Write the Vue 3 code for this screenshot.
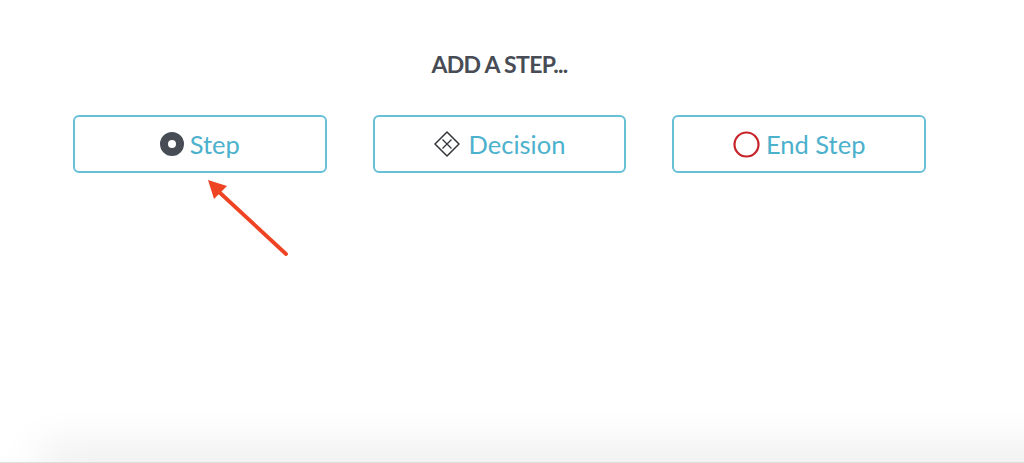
<script setup>
const steps = [
  { id: "step", label: "Step" },
  { id: "decision", label: "Decision" },
  { id: "end", label: "End Step" },
];
</script>

<template>
  <div class="page">
    <div class="content">
      <h2 class="title">ADD A STEP...</h2>
      <div class="buttons">
        <button v-for="s in steps" :key="s.id" class="step-btn" :class="s.id">
          <svg v-if="s.id === 'step'" class="icon" width="24" height="24" viewBox="0 0 24 24">
            <circle cx="12" cy="12" r="8" fill="none" stroke="#474c55" stroke-width="8" />
          </svg>
          <svg v-else-if="s.id === 'decision'" class="icon" width="26" height="26" viewBox="0 0 26 26">
            <path d="M13 1 L25 13 L13 25 L1 13 Z" fill="none" stroke="#33363b" stroke-width="1.5" stroke-linejoin="round" />
            <path d="M8.5 8.5 L17.5 17.5 M17.5 8.5 L8.5 17.5" fill="none" stroke="#33363b" stroke-width="1.3" />
          </svg>
          <svg v-else class="icon" width="27" height="27" viewBox="0 0 27 27">
            <circle cx="13.5" cy="13.5" r="12" fill="none" stroke="#c7242a" stroke-width="2.2" />
          </svg>
          <span>{{ s.label }}</span>
        </button>
      </div>
    </div>

    <svg class="arrow" width="100" height="90" viewBox="0 0 100 90">
      <path d="M8 0 L27 6 L14 19 Z" fill="#ee4423" />
      <path d="M18 11 L86 74" stroke="#ee4423" stroke-width="3.8" stroke-linecap="round" />
    </svg>

    <div class="bottom-shadow"></div>
    <div class="bottom-line"></div>
  </div>
</template>

<style scoped>
.page {
  position: relative;
  height: 463px;
  overflow: hidden;
  background: #ffffff;
  padding: 51px 0 0 73px;
  box-sizing: border-box;
  font-family: Lato, "Open Sans", sans-serif;
}

.content {
  width: 853px;
}

.title {
  margin: 0 0 37px;
  height: 27px;
  line-height: 27px;
  text-align: center;
  font-size: 23px;
  font-weight: 700;
  letter-spacing: -0.65px;
  color: #474c55;
}

.buttons {
  display: flex;
  gap: 46px;
}

.step-btn {
  flex: 1;
  height: 58px;
  display: flex;
  align-items: center;
  justify-content: center;
  gap: 6px;
  box-sizing: border-box;
  background: #ffffff;
  border: 2px solid #68c0d6;
  border-radius: 6px;
  padding: 0;
  font-family: inherit;
  font-size: 25.5px;
  color: #4bb1cc;
}

.step-btn.decision {
  gap: 9px;
}

.icon {
  flex: none;
}

.arrow {
  position: absolute;
  left: 200px;
  top: 180px;
}

.bottom-shadow {
  position: absolute;
  left: 50px;
  right: -80px;
  bottom: -2px;
  height: 2px;
  box-shadow: 0 0 46px 10px rgba(0, 0, 0, 0.13);
}

.bottom-line {
  position: absolute;
  left: 0;
  right: 0;
  bottom: 0;
  height: 1px;
  background: #dedede;
}
</style>
